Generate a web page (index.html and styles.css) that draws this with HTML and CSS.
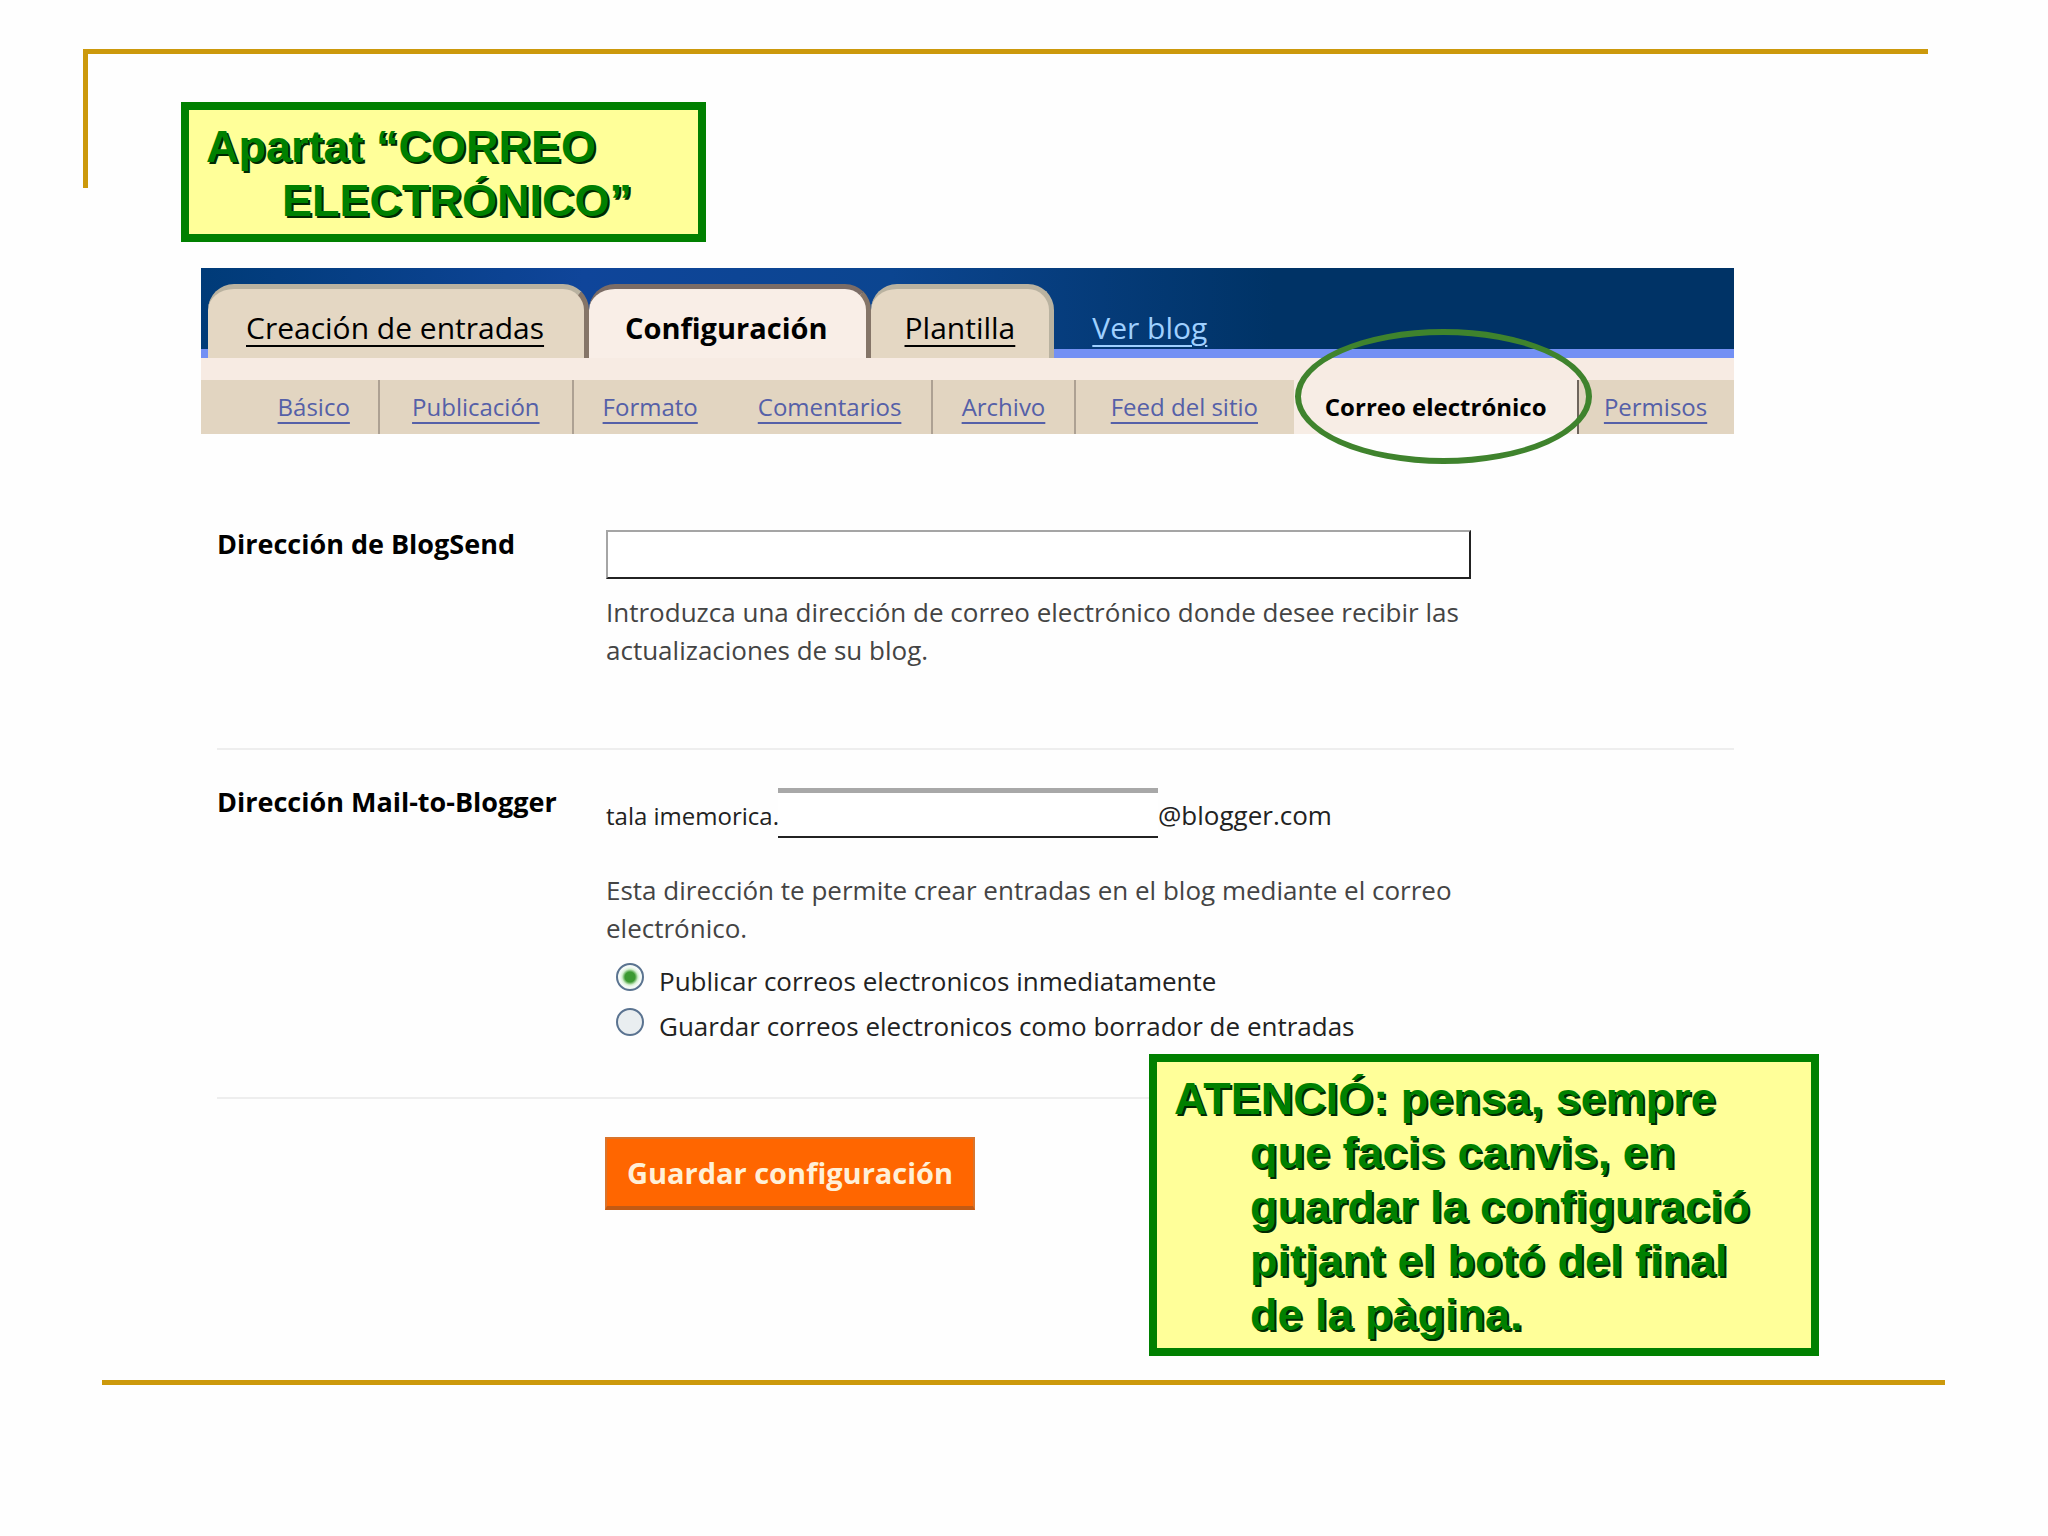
FILE: index.html
```html
<!DOCTYPE html>
<html lang="ca">
<head>
    <title>Apartat Correo electrónico</title>
    <meta charset="utf-8">
    <link rel="stylesheet" href="styles.css">
</head>
<body>
    <div class="slide">
        <h1 class="note title">Apartat “CORREO<br>ELECTRÓNICO”</h1>

        <div class="blogger">
            <div class="tabs">
                <a class="tab" href="#">Creación de entradas</a>
                <a class="tab current" href="#">Configuración</a>
                <a class="tab last" href="#">Plantilla</a>
                <a class="view" href="#">Ver blog</a>
            </div>

            <div class="subtabs">
                <span><a href="#">Básico</a></span>
                <span><a href="#">Publicación</a></span>
                <span class="plain"><a href="#">Formato</a></span>
                <span><a href="#">Comentarios</a></span>
                <span><a href="#">Archivo</a></span>
                <span class="plain"><a href="#">Feed del sitio</a></span>
                <span class="current"><a href="#">Correo electrónico</a></span>
                <span class="plain"><a href="#">Permisos</a></span>
            </div>

            <form>
                <div class="row send">
                    <label class="name" for="blogsend">Dirección de BlogSend</label>
                    <div>
                        <input type="text" class="box" id="blogsend">
                        <p class="help">Introduzca una dirección de correo electrónico donde desee recibir las<br>actualizaciones de su blog.</p>
                    </div>
                </div>

                <div class="row mail">
                    <label class="name" for="secret">Dirección Mail-to-Blogger</label>
                    <div>
                        <div class="address">
                            <span class="user">tala imemorica.</span>
                            <input type="text" class="secret" id="secret">
                            <span class="domain">@blogger.com</span>
                        </div>
                        <p class="help">Esta dirección te permite crear entradas en el blog mediante el correo<br>electrónico.</p>
                        <div class="options">
                            <div class="option">
                                <input type="radio" name="publish" id="now" checked>
                                <label for="now">Publicar correos electronicos inmediatamente</label>
                            </div>
                            <div class="option">
                                <input type="radio" name="publish" id="draft">
                                <label for="draft">Guardar correos electronicos como borrador de entradas</label>
                            </div>
                        </div>
                    </div>
                </div>

                <div class="save">
                    <button type="button">Guardar configuración</button>
                </div>
            </form>

            <div class="circle"></div>
            <p class="note warning">ATENCIÓ: pensa, sempre<br>que facis canvis, en<br>guardar la configuració<br>pitjant el botó del final<br>de la pàgina.</p>
        </div>
    </div>
    <hr class="bottom">
</body>
</html>
```

FILE: styles.css
```css
body {
    font-family: "Open Sans", "Trebuchet MS", sans-serif;
    font-size: 24px;
    background-color: #fefefe;
    color: #222;
    margin: 0;
    padding: 0;
}

/* gold line on top, short one going down on the left */
.slide {
    margin: 49px 120px 0 83px;
    padding: 48px 0 0 98px;
    border-top: 5px solid #cc990c;
    background: linear-gradient(#cc990c, #cc990c) left top / 5px 134px no-repeat;
    display: flow-root;
}

.bottom {
    height: 5px;
    margin: 24px 103px 0 102px;
    border: 0;
    background-color: #cc990c;
}

.note {
    box-sizing: border-box;
    margin: 0;
    padding: 10px 16px 6px 93px;
    border: 8px solid #008000;
    background-color: #ffff99;
    color: #008000;
    font-family: "Liberation Sans", Arial, sans-serif;
    font-size: 45px;
    font-weight: bold;
    line-height: 54px;
    text-indent: -76px;
    text-shadow: 2px 2px 0 #002800;
}

.title {
    max-width: 525px;
}

.blogger {
    position: relative;
    margin: 26px 194px 0 20px;
}

.tabs {
    display: flex;
    align-items: flex-end;
    box-sizing: border-box;
    height: 90px;
    padding-left: 7px;
    border-bottom: 9px solid #7390f4;
    background: linear-gradient(90deg, #003b78, #0f459a 25%, #0b4590 45%, #003366 70%);
    background-color: #003366;
}

.tab {
    box-sizing: border-box;
    height: 74px;
    margin-bottom: -9px;
    padding: 20px 40px 0 38px;
    border-top: 5px solid #b9b2a0;
    border-right: 5px solid #857568;
    border-radius: 26px 26px 0 0;
    background-color: #e4d7c3;
    color: #000;
    font-size: 30px;
    line-height: 38px;
}

.tab.last {
    padding-right: 34px;
    padding-left: 34px;
    border-right-color: #b9b2a0;
}

.tab.current {
    padding-right: 38px;
    padding-left: 36px;
    border-top-color: #7b6c66;
    background-color: #f9eee7;
    font-size: 29px;
    font-weight: bold;
    text-decoration: none;
}

.view {
    margin-left: 38px;
    padding-bottom: 2px;
    color: #9fd0ff;
    font-size: 30px;
    line-height: 38px;
}

.tab,
.view,
.subtabs a {
    text-decoration-thickness: 2px;
    text-underline-offset: 6px;
}

.subtabs {
    display: grid;
    grid-template-columns: 179fr 194fr 155fr 204fr 144fr 218fr 285fr 155fr;
    border-top: 22px solid #f7ebe3;
    background-color: #e2d5c1;
}

.subtabs span {
    border-right: 2px solid #ada193;
    line-height: 54px;
    text-align: center;
}

.subtabs span:first-child {
    padding-right: 28px;
    text-align: right;
}

.subtabs .plain {
    border-right-color: transparent;
}

.subtabs a {
    color: #5560a8;
}

.subtabs .current {
    border-right-color: #6e655c;
    background-color: #f7ede5;
}

.subtabs .current a {
    color: #000;
    font-weight: bold;
    text-decoration: none;
}

.row {
    display: grid;
    grid-template-columns: 389px 1fr;
    margin-left: 16px;
    border-bottom: 2px solid #eee;
}

.name {
    color: #000;
    font-size: 27px;
    font-weight: bold;
    line-height: 28px;
}

.send {
    padding-top: 96px;
    padding-bottom: 79px;
}

.box {
    display: block;
    box-sizing: border-box;
    width: 100%;
    max-width: 865px;
    height: 49px;
    border: 2px solid;
    border-color: #a5a5a5 #222 #222 #a5a5a5;
    background-color: #fff;
}

.help {
    margin: 14px 0 0;
    color: #444;
    font-size: 26px;
    line-height: 38px;
}

.mail {
    padding-top: 38px;
    padding-bottom: 53px;
}

.address {
    display: flex;
    align-items: center;
}

.address span {
    padding-top: 4px;
    white-space: nowrap;
}

.user {
    width: 172px;
}

.domain {
    font-size: 26px;
}

.secret {
    box-sizing: border-box;
    width: 380px;
    height: 50px;
    border: 0;
    border-top: 5px solid #a8a8a8;
    border-bottom: 2px solid #222;
    background-color: #fff;
}

.mail .help {
    margin-top: 33px;
}

.options {
    margin-top: 7px;
}

.option {
    display: flex;
    align-items: center;
    height: 45px;
}

.option input {
    appearance: none;
    box-sizing: border-box;
    width: 28px;
    height: 28px;
    margin: 0 15px 0 10px;
    border: 2px solid #5a7390;
    border-radius: 50%;
    background-color: #e9eef0;
}

.option input:checked {
    background: radial-gradient(#3c9a32 0 5px, #d5f0d0 8px, #f4faf6 10px);
}

.option label {
    padding-top: 8px;
    font-size: 26px;
}

.save {
    padding: 38px 0 146px 404px;
}

button {
    display: block;
    height: 73px;
    width: 370px;
    border: 2px solid #d9742c;
    border-bottom: 4px solid #c25a14;
    background-color: #ff6600;
    color: #fff0d8;
    font-family: inherit;
    font-size: 29px;
    font-weight: bold;
}

/* marks the tab we are talking about */
.circle {
    position: absolute;
    top: 61px;
    right: 142px;
    box-sizing: border-box;
    width: 297px;
    height: 135px;
    border: 6px solid #3f832d;
    border-radius: 50%;
}

.warning {
    position: absolute;
    top: 786px;
    right: -85px;
    width: 670px;
}
```
